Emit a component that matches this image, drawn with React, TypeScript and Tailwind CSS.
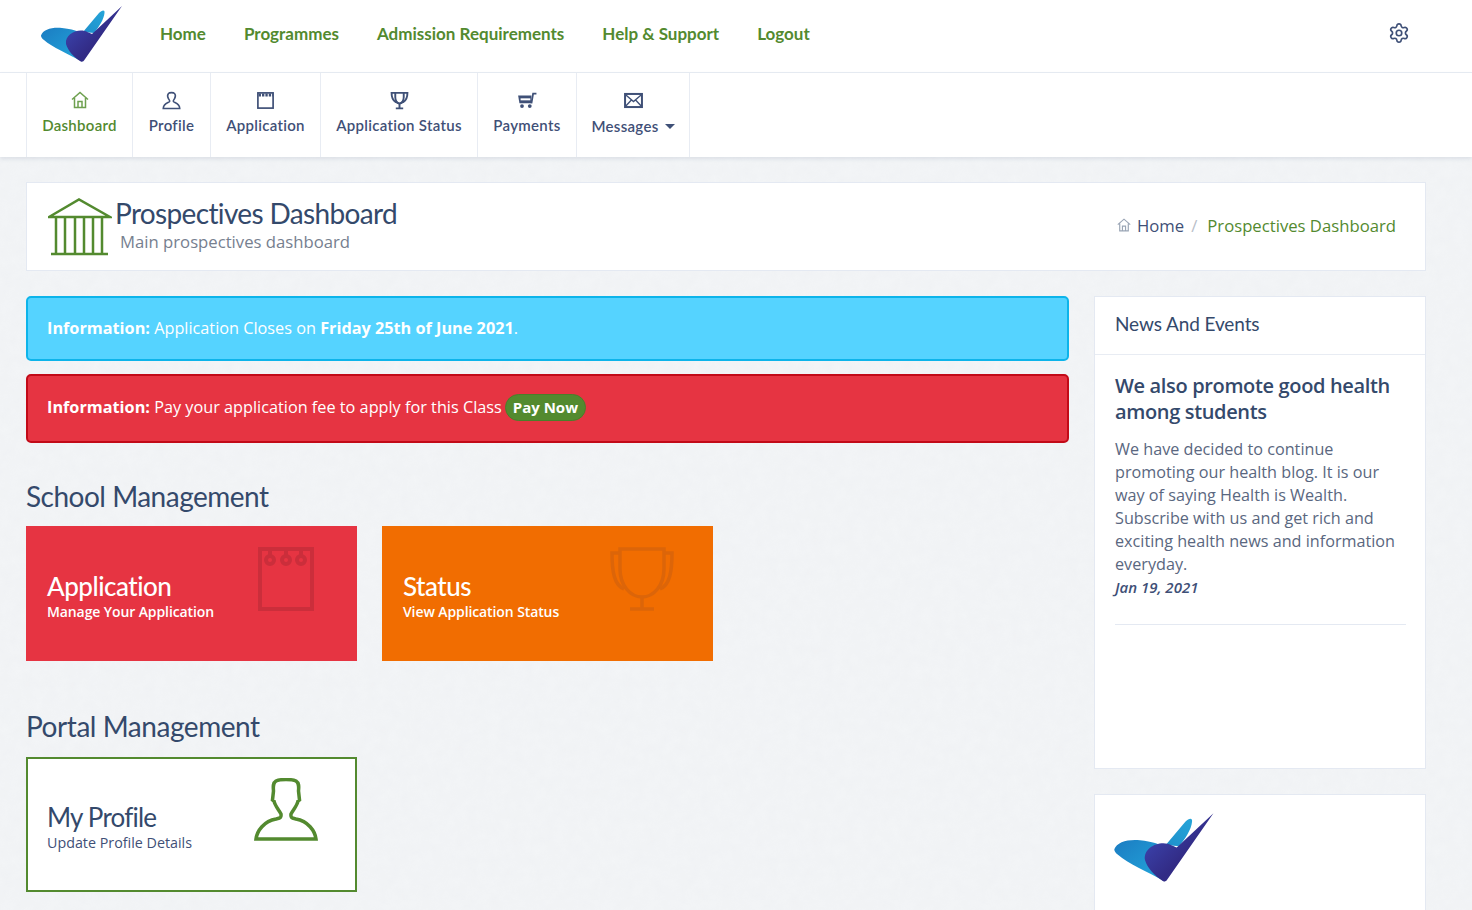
import { Settings } from "lucide-react";

function Logo({ className }: { className: string }) {
  return (
    <svg viewBox="40 5 84 58" className={className}>
      <defs>
        <linearGradient id="lw" x1="0" y1="0" x2="1" y2="1">
          <stop offset="0" stopColor="#1b7cc2" />
          <stop offset="1" stopColor="#23a8dc" />
        </linearGradient>
        <linearGradient id="lu" x1="0" y1="1" x2="1" y2="0">
          <stop offset="0" stopColor="#1f8fcb" />
          <stop offset="1" stopColor="#25a5d9" />
        </linearGradient>
        <linearGradient id="ld" x1="0" y1="0" x2="1" y2="1">
          <stop offset="0" stopColor="#3f4fc0" />
          <stop offset="0.6" stopColor="#322b85" />
          <stop offset="1" stopColor="#2f2f8f" />
        </linearGradient>
      </defs>
      <path d="M41 35.500C43 29.500 52 27 62 28C72 29 78 31 82 34L82 61.500C68 54 52 47 44 40C42 38.500 41 37 41 35.500Z" fill="url(#lw)" />
      <path d="M83 32L99 13C102 10 105 9.500 104.500 13C104 19 99 27 94 33Z" fill="url(#lu)" />
      <path d="M122 6L84 60.500C83 62 81 62 80 61C74 57 68 51 66 44C65 36 73 30.500 81 30.500C86 30.500 89 33 92 34Z" fill="url(#ld)" />
    </svg>
  );
}

const sw = { fill: "none", stroke: "currentColor", strokeWidth: 1.5 } as const;

function HomeIcon({ className }: { className: string }) {
  return (
    <svg viewBox="0 0 18 18" className={className} {...sw}>
      <path d="M1 8.500L9 1.500L17 8.500M3.500 7V16.500H14.500V7M7 16.500V10.500H11V16.500" />
    </svg>
  );
}
function UserIcon({ className }: { className: string }) {
  return (
    <svg viewBox="0 0 18 18" className={className} {...sw}>
      <path d="M6 2.500C7 1.200 11 1.200 12 2.500C12.800 3.500 12.500 6 12 7C11.500 8 10.700 8.700 10.700 9.700C10.700 11.200 16.500 11 16.800 16.500H1.200C1.500 11 7.300 11.200 7.300 9.700C7.300 8.700 6.500 8 6 7C5.500 6 5.200 3.500 6 2.500Z" />
    </svg>
  );
}
function PadIcon({ className }: { className: string }) {
  return (
    <svg viewBox="0 0 18 18" className={className}>
      <rect x="1.800" y="1.800" width="14.400" height="14.400" fill="none" stroke="currentColor" strokeWidth="1.600" />
      <path d="M2.500 3.800H16" stroke="currentColor" strokeWidth="2.800" strokeDasharray="2.200 1" fill="none" />
    </svg>
  );
}
function TrophyIcon({ className }: { className: string }) {
  return (
    <svg viewBox="0 0 18 18" className={className} {...sw} strokeWidth={1.800}>
      <path d="M1.500 1.800H16.500C16.500 6.500 15.500 8.800 12.500 10.500C11 11.500 10 12 9 12C8 12 7 11.500 5.500 10.500C2.500 8.800 1.500 6.500 1.500 1.800Z" />
      <path d="M5 2V6C5 9 7 11.500 9 12C11 11.500 13 9 13 6V2M9 12V16M5.500 16.500H12.500" />
    </svg>
  );
}
function CartIcon({ className }: { className: string }) {
  return (
    <svg viewBox="0 0 18 18" className={className}>
      <path d="M1 5H13V12H2.200Z" fill="currentColor" />
      <path d="M13 12L14.500 3.200H17.500" fill="none" stroke="currentColor" strokeWidth="1.600" />
      <path d="M3.200 7.500H12V9.300H3.200Z" fill="#fff" />
      <circle cx="4.500" cy="14.500" r="1.700" fill="currentColor" />
      <circle cx="11.500" cy="14.500" r="1.700" fill="currentColor" />
    </svg>
  );
}
function MailIcon({ className }: { className: string }) {
  return (
    <svg viewBox="0 0 18 18" className={className} {...sw}>
      <rect x="1" y="2.800" width="16" height="12.400" strokeWidth="1.900" />
      <path d="M1.500 3.500L9 10L16.500 3.500M1.500 14.500L7 8.500M16.500 14.500L11 8.500" strokeWidth="1.300" />
    </svg>
  );
}
function BuildingIcon({ className }: { className: string }) {
  return (
    <svg viewBox="0 0 64 58" className={className} fill="none" stroke="#538a2f" strokeWidth="2.500">
      <path d="M1 19L31 1.500L62 19H1Z" />
      <path d="M8 19V55M17 19V55M27 19V55M36 19V55M45 19V55M54 19V55" />
      <path d="M3 56H60" />
    </svg>
  );
}

const topLinks = ["Home", "Programmes", "Admission Requirements", "Help & Support", "Logout"];
const alegreya = "font-['Lato',sans-serif]";

function NavItem({ icon, label, active, width }: { icon: React.ReactNode; label: React.ReactNode; active?: boolean; width: string }) {
  return (
    <div className={`flex flex-col items-center border-l border-[#e8ecf3] pt-[17px] ${width} ${active ? "text-[#538a2f]" : "text-[#3f5077]"}`}>
      <div className="flex h-[20px] items-center">{icon}</div>
      <div className={`mt-[5px] text-[15px] leading-[20px] font-semibold tracking-[0.3px] whitespace-nowrap ${alegreya}`}>{label}</div>
    </div>
  );
}

function Tile({ bg, icon, title, sub }: { bg: string; icon: React.ReactNode; title: string; sub: string }) {
  return (
    <div className={`relative h-[135px] w-[331px] pl-[21px] pt-[43px] text-white ${bg}`}>
      <div className={`text-[26px] leading-[34px] font-medium tracking-[-0.5px] ${alegreya}`}>{title}</div>
      <div className="text-[14px] leading-[18px] font-semibold tracking-[-0.1px]">{sub}</div>
      {icon}
    </div>
  );
}

export default function App() {
  return (
    <div className={`h-[910px] overflow-hidden bg-[#f3f5f7] font-['Open_Sans',sans-serif] text-[#3f5077] bg-[url("data:image/svg+xml,%3Csvg%20xmlns='http://www.w3.org/2000/svg'%20width='300'%20height='300'%3E%3Cfilter%20id='n'%3E%3CfeTurbulence%20type='fractalNoise'%20baseFrequency='.09'%20numOctaves='4'/%3E%3CfeColorMatrix%20values='0%200%200%200%200.5%200%200%200%200%200.5%200%200%200%200%200.55%200%200%200%20.05%200'/%3E%3C/filter%3E%3Crect%20width='300'%20height='300'%20filter='url(%23n)'/%3E%3C/svg%3E")]`}>
      <header className="flex h-[73px] items-center border-b border-[#e8ecf3] bg-white pl-[40px] pr-[62px]">
        <Logo className="mb-[4px] h-[58px] w-[84px]" />
        <nav className={`ml-[36px] flex gap-[38px] pb-[4px] text-[17px] font-bold text-[#538a2f] ${alegreya}`}>
          {topLinks.map((l) => (
            <span key={l} className="whitespace-nowrap">{l}</span>
          ))}
        </nav>
        <Settings className="ml-auto mb-[7px] h-[22px] w-[22px] text-[#3f5077]" strokeWidth={1.800} />
      </header>

      <div className="flex h-[84px] bg-white pl-[26px] shadow-[0_2px_4px_rgba(60,80,120,0.12)]">
        <NavItem width="w-[106px]" active icon={<HomeIcon className="h-[18px] w-[18px] text-[#6ea04f]" />} label="Dashboard" />
        <NavItem width="w-[78px]" icon={<UserIcon className="h-[19px] w-[19px]" />} label="Profile" />
        <NavItem width="w-[110px]" icon={<PadIcon className="h-[19px] w-[19px]" />} label="Application" />
        <NavItem width="w-[157px]" icon={<TrophyIcon className="h-[19px] w-[19px]" />} label="Application Status" />
        <NavItem width="w-[99px]" icon={<CartIcon className="h-[20px] w-[20px]" />} label="Payments" />
        <NavItem
          width="w-[113px]"
          icon={<MailIcon className="h-[19px] w-[19px]" />}
          label={
            <span className="flex items-center gap-[6px] pt-[1px]">
              Messages
              <span className="h-0 w-0 border-x-[5px] border-t-[5px] border-x-transparent border-t-[#3f5077]" />
            </span>
          }
        />
        <div className="border-l border-[#e8ecf3]" />
      </div>

      <main className="pl-[26px] pr-[46px] pt-[25px]">
        <section className="flex h-[89px] items-center justify-between border border-[#e4e9f2] bg-white pl-[21px] pr-[29px]">
          <div className="flex items-center">
            <BuildingIcon className="h-[58px] w-[64px]" />
            <div className="ml-[3px] -mt-[4px]">
              <div className={`text-[28px] leading-[34px] tracking-[-0.65px] text-[#34496b] ${alegreya}`}>Prospectives Dashboard</div>
              <div className="ml-[5px] mt-[1px] text-[16.700px] leading-[22px] text-[#76808f]">Main prospectives dashboard</div>
            </div>
          </div>
          <div className="-mt-[2px] flex items-center text-[16.700px]">
            <HomeIcon className="mr-[6px] h-[14px] w-[14px] text-[#9aa5b5]" />
            <span>Home</span>
            <span className="mx-[7px] text-[#b8bec8]">/</span>
            <span className="ml-[3px] text-[#538a2f]">Prospectives Dashboard</span>
          </div>
        </section>

        <div className="mt-[25px] flex gap-[25px]">
          <div className="w-[1043px]">
            <div className="flex h-[65px] items-center rounded-[5px] border-2 border-[#0db4ea] bg-[#55d3ff] pb-[1px] pl-[19px] text-[16.250px] text-white">
              <p><b>Information:</b> Application Closes on <b>Friday 25th of June 2021</b>.</p>
            </div>
            <div className="mt-[13px] flex h-[69px] items-center rounded-[5px] border-2 border-[#c20a18] bg-[#e63442] pb-[3px] pl-[19px] text-[16.250px] text-white">
              <p className="flex items-center">
                <b>Information:</b>&nbsp;Pay your application fee to apply for this Class
                <span className="ml-[3px] mt-[1px] rounded-full border border-[#4a7f2a] bg-[#538a2f] px-[7px] text-[15px] leading-[25px] font-bold">Pay Now</span>
              </p>
            </div>

            <h2 className={`mt-[36px] text-[28px] leading-[34px] tracking-[-0.5px] text-[#34496b] ${alegreya}`}>School Management</h2>
            <div className="mt-[13px] flex gap-[25px]">
              <Tile
                bg="bg-[#e63442]"
                title="Application"
                sub="Manage Your Application"
                icon={
                  <svg viewBox="0 0 56 64" className="absolute left-[232px] top-[21px] h-[64px] w-[56px]" fill="none" stroke="#cb2e3b" strokeWidth="4">
                    <rect x="2" y="2" width="52" height="60" />
                    <circle cx="12" cy="13" r="4" />
                    <circle cx="28" cy="13" r="4" />
                    <circle cx="43" cy="13" r="4" />
                    <path d="M12 3V9M28 3V9M43 3V9" />
                  </svg>
                }
              />
              <Tile
                bg="bg-[#f16d01]"
                title="Status"
                sub="View Application Status"
                icon={
                  <svg viewBox="0 0 64 64" className="absolute left-[228px] top-[21px] h-[64px] w-[64px]" fill="none" stroke="#dc6509" strokeWidth="3.500">
                    <path d="M10 2H54V22C54 38 44 50 32 50C20 50 10 38 10 22Z" />
                    <path d="M10 6H2C2 24 4 38 14 42M54 6H62C62 24 60 38 50 42M32 50V61M20 62H44" />
                  </svg>
                }
              />
            </div>

            <h2 className={`mt-[48px] text-[28px] leading-[34px] tracking-[-0.45px] text-[#34496b] ${alegreya}`}>Portal Management</h2>
            <div className="relative mt-[14px] h-[135px] w-[331px] border-2 border-[#538a2f] bg-white pl-[19px] pt-[41px]">
              <div className={`text-[26px] leading-[34px] tracking-[-0.8px] text-[#34496b] ${alegreya}`}>My Profile</div>
              <div className="text-[14.300px] leading-[18px] text-[#3f5077]">Update Profile Details</div>
              <svg viewBox="0 0 64 64" className="absolute left-[226px] top-[19px] h-[64px] w-[64px]" fill="none" stroke="#538a2f" strokeWidth="3.500">
                <path d="M22 3C26 1 38 1 42 3C45 5 45 8 44.500 13L45.500 22L44 23C43 28 39 32 37 36C36.500 40 38 40 42 41C54 43 61 53 62 61H2C3 53 10 43 22 41C26 40 27.500 40 27 36C25 32 21 28 20 23L18.500 22L19.500 13C19 8 19 5 22 3Z" />
              </svg>
            </div>
          </div>

          <aside className="w-[332px]">
            <div className="h-[473px] border border-[#e4e9f2] bg-white">
              <div className={`flex h-[58px] items-center border-b border-[#e8ecf3] pb-[2px] pl-[20px] text-[19px] tracking-[-0.1px] text-[#34496b] ${alegreya}`}>News And Events</div>
              <div className="pl-[20px] pr-[19px] pt-[18px]">
                <h3 className="text-[20px] leading-[26px] font-semibold tracking-[-0.35px] text-[#34496b]">We also promote good health among students</h3>
                <p className="mt-[13px] text-[16.200px] leading-[23px] text-[#5a6780]">
                  We have decided to continue promoting our health blog. It is our way of saying Health is Wealth. Subscribe with us and get rich and exciting health news and information everyday.
                </p>
                <p className="text-[15px] leading-[23px] font-semibold italic text-[#3f5077]">Jan 19, 2021</p>
                <div className="mt-[25px] border-b border-[#e4e9f2]" />
              </div>
            </div>
            <div className="mt-[25px] h-[200px] border border-[#e4e9f2] bg-white pl-[18px] pt-[17px]">
              <Logo className="h-[71px] w-[103px]" />
            </div>
          </aside>
        </div>
      </main>
    </div>
  );
}
